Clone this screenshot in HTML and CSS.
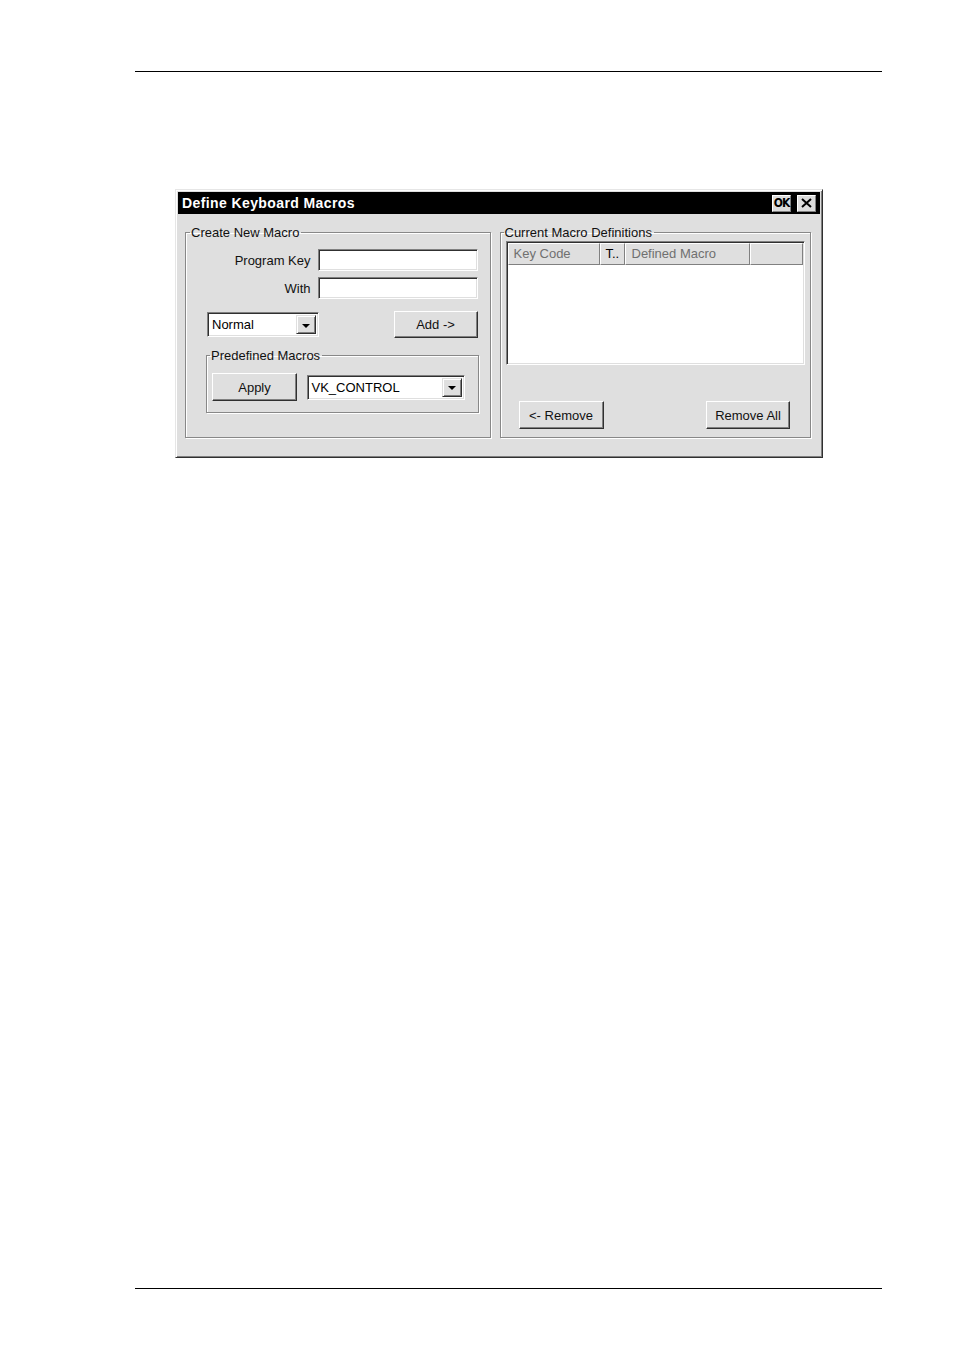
FILE: index.html
```html
<!DOCTYPE html>
<html>
<head>
<meta charset="utf-8">
<title>Define Keyboard Macros</title>
<link rel="stylesheet" href="styles.css">
</head>
<body>
<div class="page">
  <div class="rule rule-top"></div>
  <div class="dialog">
    <div class="titlebar">
      <span class="title">Define Keyboard Macros</span>
      <div class="title-buttons">
        <span class="tbtn tbtn-ok">OK</span>
        <span class="tbtn tbtn-x">
          <svg width="11" height="10" viewBox="0 0 11 10"><path d="M1 1 L10 9 M10 1 L1 9" stroke="#000" stroke-width="2" fill="none"/></svg>
        </span>
      </div>
    </div>
    <div class="dialog-body">
      <fieldset class="group group-left">
        <legend>Create New Macro</legend>
        <div class="inner-left">
          <div class="form-row">
            <label class="lbl">Program Key</label>
            <div class="textbox"></div>
          </div>
          <div class="form-row">
            <label class="lbl">With</label>
            <div class="textbox"></div>
          </div>
          <div class="action-row">
            <div class="combo combo-normal">
              <span class="combo-text">Normal</span>
              <span class="combo-btn"><span class="arrow"></span></span>
            </div>
            <button class="btn btn-add">Add -&gt;</button>
          </div>
          <fieldset class="group group-predef">
            <legend>Predefined Macros</legend>
            <div class="predef-row">
              <button class="btn btn-apply">Apply</button>
              <div class="combo combo-vk">
                <span class="combo-text">VK_CONTROL</span>
                <span class="combo-btn"><span class="arrow"></span></span>
              </div>
            </div>
          </fieldset>
        </div>
      </fieldset>
      <fieldset class="group group-right">
        <legend>Current Macro Definitions</legend>
        <div class="inner-right">
          <div class="listview">
            <div class="lv-header">
              <div class="lv-col col-key">Key Code</div>
              <div class="lv-col col-t">T..</div>
              <div class="lv-col col-def">Defined Macro</div>
              <div class="lv-col col-rest"></div>
            </div>
          </div>
          <div class="remove-row">
            <button class="btn btn-remove">&lt;- Remove</button>
            <button class="btn btn-removeall">Remove All</button>
          </div>
        </div>
      </fieldset>
    </div>
  </div>
  <div class="rule rule-bottom"></div>
</div>
</body>
</html>
```
FILE: styles.css
```css
html, body {
  margin: 0;
  padding: 0;
  background: #fff;
}
body {
  width: 953px;
  height: 1352px;
  font-family: "Liberation Sans", Arial, sans-serif;
  font-size: 13px;
  color: #111;
}
.page {
  display: flex;
  flex-direction: column;
  padding-top: 71px;
}
.rule {
  margin-left: 135px;
  width: 747px;
  height: 1px;
  background: #000;
}
.rule-bottom {
  margin-top: 830px;
}

/* dialog */
.dialog {
  margin: 117px 0 0 175px;
  width: 648px;
  height: 269px;
  box-sizing: border-box;
  background: #dfdfdf;
  border: 1px solid;
  border-color: #e6e6e6 #303030 #303030 #e6e6e6;
  box-shadow: inset 1px 1px 0 #fff, inset -1px -1px 0 #808080;
  padding: 2px;
  display: flex;
  flex-direction: column;
}
.titlebar {
  height: 22px;
  background: #000;
  color: #fff;
  display: flex;
  align-items: center;
  justify-content: space-between;
  padding: 0 4px 0 4px;
  flex: none;
}
.title {
  font-weight: bold;
  font-size: 14px;
  letter-spacing: 0.4px;
}
.title-buttons {
  display: flex;
  gap: 6px;
  align-items: center;
}
.tbtn {
  width: 19px;
  height: 17px;
  box-sizing: border-box;
  background: #dcdcdc;
  border: 1px solid;
  border-color: #fff #808080 #808080 #fff;
  display: flex;
  align-items: center;
  justify-content: center;
  color: #000;
}
.tbtn-ok {
  font-weight: bold;
  font-size: 12px;
  letter-spacing: -1px;
  font-family: "DejaVu Sans Condensed", "DejaVu Sans", sans-serif;
}
.dialog-body {
  flex: 1;
  display: flex;
  gap: 9px;
  padding: 11px 9px 17px 7px;
}

/* group boxes */
.group {
  margin: 0;
  padding: 0;
  min-width: 0;
  border: 1px solid #888;
  box-shadow: 1px 1px 0 #fff, inset 1px 1px 0 #fff;
  box-sizing: border-box;
}
.group legend {
  padding: 0 2px 0 1px;
  margin-left: 4px;
  line-height: 15px;
  font-size: 13px;
}
.group-left {
  width: 306px;
}
.inner-left {
  padding: 9px 12px 0 21px;
}
.group-right {
  width: 312px;
}
.group-right legend {
  margin-left: 3px;
}
.inner-right {
  padding: 1px 5px 0 5px;
}

/* form */
.form-row {
  display: flex;
  justify-content: flex-end;
  align-items: center;
  gap: 7px;
  margin-bottom: 6px;
}
.lbl {
  font-size: 13px;
}
.textbox {
  width: 160px;
  height: 22px;
  box-sizing: border-box;
  background: #fff;
  border: 1px solid;
  border-color: #808080 #fff #fff #808080;
  box-shadow: inset 1px 1px 0 #303030, inset -1px -1px 0 #dfdfdf;
}
.action-row {
  display: flex;
  justify-content: space-between;
  align-items: center;
  margin-top: 12px;
}

/* combo */
.combo {
  height: 25px;
  box-sizing: border-box;
  background: #fff;
  border: 1px solid;
  border-color: #808080 #fff #fff #808080;
  box-shadow: inset 1px 1px 0 #303030, inset -1px -1px 0 #dfdfdf;
  display: flex;
  align-items: stretch;
  padding: 2px;
}
.combo-normal { width: 112px; }
.combo-vk { width: 158px; }
.combo-text {
  flex: 1;
  padding-left: 2px;
  line-height: 19px;
  color: #000;
}
.combo-btn {
  width: 20px;
  box-sizing: border-box;
  background: #dfdfdf;
  border: 1px solid;
  border-color: #dfdfdf #303030 #303030 #dfdfdf;
  box-shadow: inset 1px 1px 0 #fff, inset -1px -1px 0 #808080;
  display: flex;
  align-items: center;
  justify-content: center;
}
.arrow {
  width: 0;
  height: 0;
  border-left: 4px solid transparent;
  border-right: 4px solid transparent;
  border-top: 4px solid #000;
  margin-top: 2px;
}

/* buttons */
.btn {
  font-family: "Liberation Sans", Arial, sans-serif;
  font-size: 13px;
  color: #111;
  background: #dfdfdf;
  box-sizing: border-box;
  border: 1px solid;
  border-color: #fff #303030 #303030 #fff;
  box-shadow: inset -1px -1px 0 #808080;
  padding: 0;
  margin: 0;
}
.btn-add { width: 84px; height: 27px; }
.btn-apply { width: 85px; height: 28px; }
.btn-remove { width: 85px; height: 28px; }
.btn-removeall { width: 84px; height: 28px; }

.group-predef {
  margin: 10px -1px 0 -1px;
}
.group-predef legend {
  margin-left: 3px;
}
.predef-row {
  display: flex;
  justify-content: space-between;
  align-items: center;
  padding: 10px 13px 11px 5px;
}

/* list view */
.listview {
  height: 124px;
  box-sizing: border-box;
  background: #fff;
  border: 1px solid;
  border-color: #808080 #fff #fff #808080;
  box-shadow: inset 1px 1px 0 #303030, inset -1px -1px 0 #dfdfdf;
  padding: 1px;
}
.lv-header {
  display: flex;
  height: 22px;
}
.lv-col {
  box-sizing: border-box;
  background: #dfdfdf;
  border: 1px solid;
  border-color: #fff #808080 #808080 #fff;
  padding-left: 5px;
  line-height: 20px;
  color: #707070;
  white-space: nowrap;
  overflow: hidden;
}
.col-key { width: 92px; }
.col-t { width: 25px; padding-left: 5px; color: #000; }
.col-def { width: 125px; padding-left: 6px; }
.col-rest { flex: 1; }

.remove-row {
  display: flex;
  justify-content: space-between;
  margin-top: 36px;
  padding: 0 15px 0 13px;
}
```
